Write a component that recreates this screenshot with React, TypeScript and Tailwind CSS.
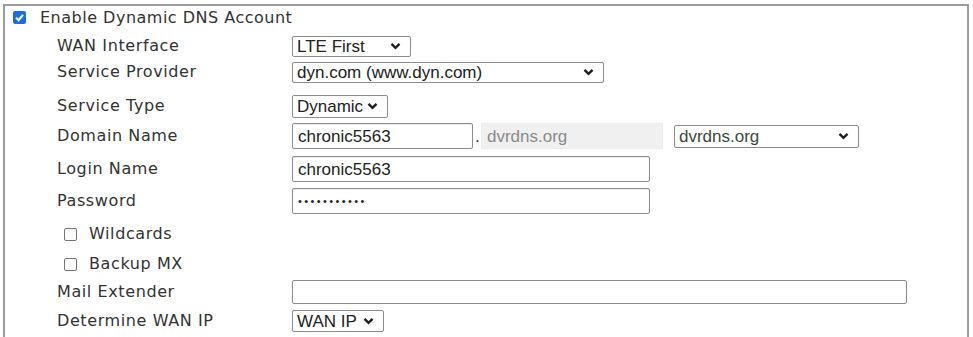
import React from 'react';

const LABEL_FONT = { fontFamily: '"DejaVu Sans", Verdana, sans-serif' };
const FIELD_FONT = { fontFamily: '"Liberation Sans", Arial, sans-serif' };

const Chevron: React.FC = () => (
  <svg width="11" height="8" viewBox="0 0 11 8" className="shrink-0">
    <polyline points="1.5,1.8 5.5,5.8 9.5,1.8" fill="none" stroke="#1f1f1f" strokeWidth="2.4" />
  </svg>
);

const Select: React.FC<{ value: string; width: string; height?: string; muted?: boolean }> = ({
  value,
  width,
  height = 'h-[22px]',
  muted,
}) => (
  <div
    className={`${width} ${height} flex items-center justify-between pl-[4px] pr-[9px] bg-white border border-[#8d8d8d] rounded-[2px] text-[17px] ${
      muted ? 'text-[#3a4a3a]' : 'text-[#222]'
    }`}
    style={FIELD_FONT}
  >
    <span className="leading-none">{value}</span>
    <Chevron />
  </div>
);

const Input: React.FC<{ value?: string; width: string; small?: boolean }> = ({ value, width, small }) => (
  <div
    className={`${width} h-[26px] flex items-center pl-[5px] bg-white border border-[#8d8d8d] rounded-[2px] shadow-[inset_0_1px_1px_rgba(0,0,0,0.08)] ${
      small ? 'text-[11px] tracking-[2.4px]' : 'text-[17px]'
    } text-[#222]`}
    style={FIELD_FONT}
  >
    <span className="leading-none">{value}</span>
  </div>
);

const Row: React.FC<{ label: string; mt: string; h?: string; children?: React.ReactNode }> = ({
  label,
  mt,
  h = 'h-[24px]',
  children,
}) => (
  <div className={`flex items-center ${mt} ${h}`}>
    <div className="w-[287px] pl-[52px] text-[16px] tracking-[0.6px] text-[#333]" style={LABEL_FONT}>
      {label}
    </div>
    <div className="flex items-center">{children}</div>
  </div>
);

const CheckRow: React.FC<{ label: string; mt: string }> = ({ label, mt }) => (
  <div className={`flex items-center ${mt} h-[24px] pl-[59px]`}>
    <span className="w-[13px] h-[13px] border border-[#767676] rounded-[2px] bg-white" />
    <span className="ml-[12px] text-[16px] tracking-[0.6px] text-[#333]" style={LABEL_FONT}>
      {label}
    </span>
  </div>
);

const App: React.FC = () => {
  return (
    <div className="w-[973px] h-[337px] bg-white overflow-hidden">
      <div className="ml-[3px] mt-[4px] w-[966px] h-[340px] border-t-2 border-x-2 border-[#9c9c9c]">
        <div className="flex items-center h-[23px] pl-[8px]">
          <span className="w-[13px] h-[13px] rounded-[2px] bg-[#1f6fd6] flex items-center justify-center">
            <svg width="11" height="11" viewBox="0 0 11 11">
              <polyline points="2,5.8 4.5,8.2 9,2.8" fill="none" stroke="#fff" strokeWidth="2" />
            </svg>
          </span>
          <span className="ml-[14px] text-[16px] tracking-[0.5px] text-[#333]" style={LABEL_FONT}>
            Enable Dynamic DNS Account
          </span>
        </div>

        <Row label="WAN Interface" mt="mt-[5px]">
          <Select value="LTE First" width="w-[119px]" height="h-[21px]" />
        </Row>
        <Row label="Service Provider" mt="mt-[2px]">
          <Select value="dyn.com (www.dyn.com)" width="w-[312px]" height="h-[21px]" />
        </Row>
        <Row label="Service Type" mt="mt-[10px]">
          <Select value="Dynamic" width="w-[96px]" height="h-[23px]" />
        </Row>
        <Row label="Domain Name" mt="mt-[5px]" h="h-[26px]">
          <Input value="chronic5563" width="w-[181px]" />
          <span className="w-[8px] text-[17px] text-[#333] self-end leading-none mb-[4px] pl-[2px]" style={FIELD_FONT}>
            .
          </span>
          <div
            className="w-[182px] h-[26px] flex items-center pl-[5px] bg-[#f0f0f0] border border-[#ececec] text-[17px] text-[#8a8a8a]"
            style={FIELD_FONT}
          >
            <span className="leading-none">dvrdns.org</span>
          </div>
          <div className="ml-[11px]">
            <Select value="dvrdns.org" width="w-[185px]" height="h-[23px]" muted />
          </div>
        </Row>
        <Row label="Login Name" mt="mt-[7px]" h="h-[26px]">
          <Input value="chronic5563" width="w-[358px]" />
        </Row>
        <Row label="Password" mt="mt-[6px]" h="h-[26px]">
          <Input value="•••••••••••" width="w-[358px]" small />
        </Row>
        <CheckRow label="Wildcards" mt="mt-[8px]" />
        <CheckRow label="Backup MX" mt="mt-[6px]" />
        <Row label="Mail Extender" mt="mt-[4px]">
          <div className="w-[615px] h-[24px] bg-white border border-[#8d8d8d] rounded-[2px]" />
        </Row>
        <Row label="Determine WAN IP" mt="mt-[5px]">
          <Select value="WAN IP" width="w-[92px]" height="h-[22px]" />
        </Row>
      </div>
    </div>
  );
};

export default App;
